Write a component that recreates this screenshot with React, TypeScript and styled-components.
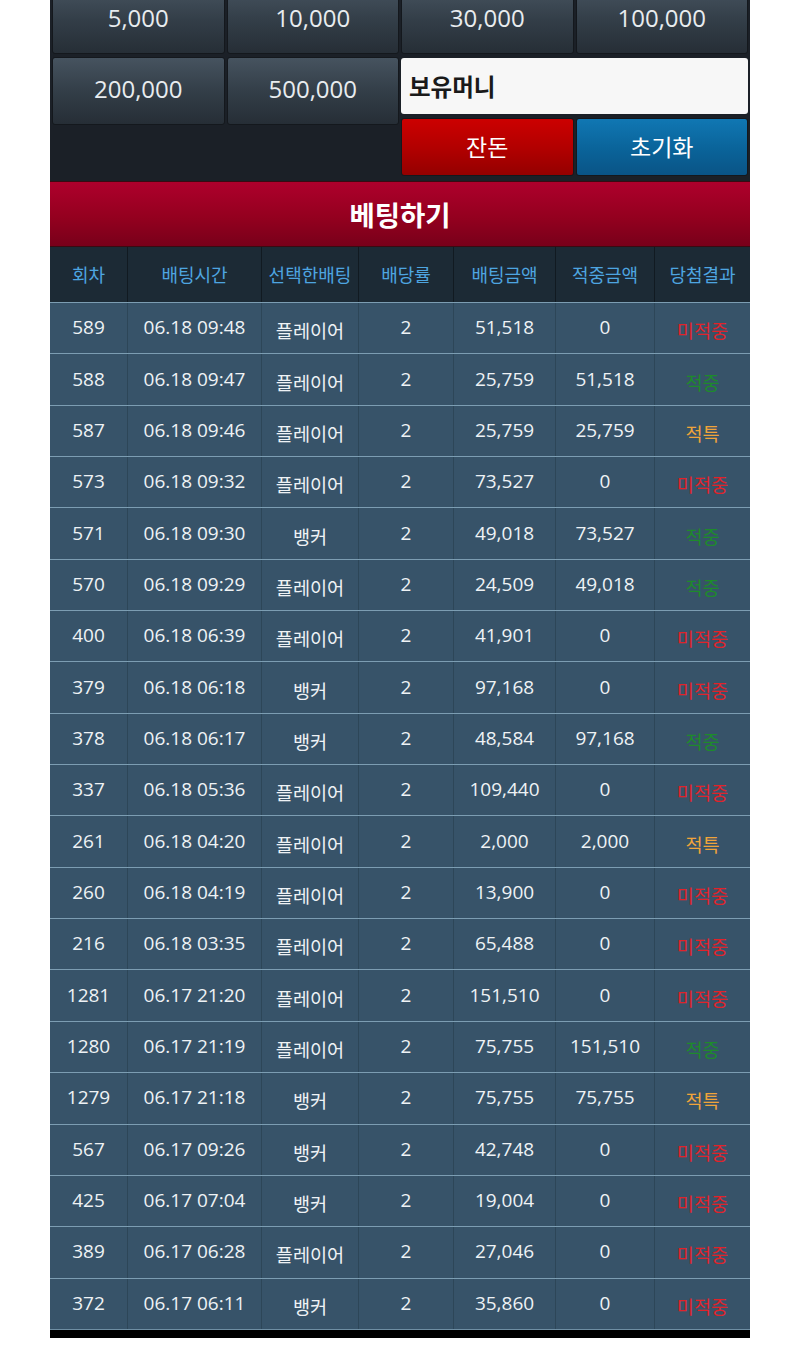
import React, {FC} from 'react';
import styled, {createGlobalStyle} from 'styled-components';

const GlobalStyle = createGlobalStyle`
  html, body {
    margin: 0;
    padding: 0;
    background: #ffffff;
  }
  body {
    font-family: "Open Sans", "Noto Sans CJK KR", sans-serif;
  }
`

const Page = styled.div`
  width: 700px;
  margin-left: 50px;
  overflow: hidden;
`

const Panel = styled.div`
  background-color: #1b2027;
  margin-top: -16px;
  padding: 2px 2px 5px 2px;
  display: grid;
  grid-template-columns: repeat(4, 1fr);
  column-gap: 2px;
  row-gap: 3px;
  align-items: start;
`

const ChipButton = styled.div`
  height: 68px;
  box-sizing: border-box;
  padding-bottom: 6px;
  border: 1px solid #14181d;
  border-radius: 3px;
  background: linear-gradient(to bottom, #46535f 0%, #333e48 50%, #262e36 100%);
  color: #e8ecef;
  font-size: 24px;
  display: flex;
  align-items: center;
  justify-content: center;
`

const Side = styled.div`
  grid-column: span 2;
  display: flex;
  flex-direction: column;
  gap: 4px;
  padding-top: 1px;
`

const MoneyBox = styled.div`
  height: 56px;
  background-color: #f7f7f7;
  border-radius: 3px;
  box-sizing: border-box;
  padding-left: 8px;
  display: flex;
  align-items: center;
  font-family: "Noto Sans CJK KR", sans-serif;
  font-weight: 700;
  font-size: 23.5px;
  color: #1a1a1a;
`

const ActionRow = styled.div`
  display: grid;
  grid-template-columns: 1fr 1fr;
  gap: 2px;
`

const ActionButton = styled.div<{ $tone: 'red' | 'blue' }>`
  height: 58px;
  border-radius: 3px;
  box-sizing: border-box;
  padding-bottom: 2px;
  border: 1px solid #14181d;
  background: ${p => p.$tone === 'red'
    ? 'linear-gradient(to bottom, #cc0000 0%, #b00000 55%, #940000 100%)'
    : 'linear-gradient(to bottom, #1077b3 0%, #0a6399 55%, #0a5486 100%)'};
  color: #ffffff;
  font-family: "Noto Sans CJK KR", sans-serif;
  font-size: 23px;
  display: flex;
  align-items: center;
  justify-content: center;
`

const TitleBar = styled.div`
  height: 64px;
  border-top: 1px solid #3a0a12;
  border-bottom: 1px solid #3a0a12;
  background: linear-gradient(to bottom, #ae002c 0%, #94001f 55%, #78001a 100%);
  color: #ffffff;
  font-family: "Noto Sans CJK KR", sans-serif;
  font-weight: 700;
  font-size: 27.5px;
  display: flex;
  align-items: center;
  justify-content: center;
`

const COLS = '77px 134px 97px 95px 102px 99px 96px'

const HeadRow = styled.div`
  display: grid;
  grid-template-columns: ${COLS};
  height: 55px;
  background-color: #1c2a35;
`

const HeadCell = styled.div`
  display: flex;
  align-items: center;
  justify-content: center;
  color: #4ea5e0;
  font-family: "Noto Sans CJK KR", sans-serif;
  font-size: 18px;
  padding-bottom: 2px;
  border-left: 1px solid #111a21;
  &:first-child {
    border-left: none;
  }
`

const Row = styled.div`
  display: grid;
  grid-template-columns: ${COLS};
  height: 51.35px;
  box-sizing: border-box;
  border-top: 1.5px solid #7c9db2;
  background-color: #375369;
`

const Cell = styled.div<{ $kr?: boolean; $color?: string }>`
  display: flex;
  align-items: center;
  justify-content: center;
  color: ${p => p.$color || '#eef2f5'};
  font-family: ${p => p.$kr ? '"Noto Sans CJK KR", sans-serif' : '"Open Sans", "Noto Sans CJK KR", sans-serif'};
  font-size: ${p => p.$kr ? '18.6px' : '19px'};
  padding-top: ${p => p.$kr ? '3px' : '0'};
  padding-bottom: ${p => p.$kr ? '0' : '2px'};
  border-left: 1px solid #2d4658;
  &:first-child {
    border-left: none;
  }
`

const BottomBar = styled.div`
  height: 8px;
  background-color: #000000;
  border-top: 1px solid #6e8ea3;
`

type Result = '미적중' | '적중' | '적특'

const resultColor: Record<Result, string> = {
  '미적중': '#e0232b',
  '적중': '#1e8a2c',
  '적특': '#f0a43a',
}

interface Bet {
  round: string
  time: string
  pick: string
  odds: string
  amount: string
  win: string
  result: Result
}

const bets: Bet[] = [
  {round: '589', time: '06.18 09:48', pick: '플레이어', odds: '2', amount: '51,518', win: '0', result: '미적중'},
  {round: '588', time: '06.18 09:47', pick: '플레이어', odds: '2', amount: '25,759', win: '51,518', result: '적중'},
  {round: '587', time: '06.18 09:46', pick: '플레이어', odds: '2', amount: '25,759', win: '25,759', result: '적특'},
  {round: '573', time: '06.18 09:32', pick: '플레이어', odds: '2', amount: '73,527', win: '0', result: '미적중'},
  {round: '571', time: '06.18 09:30', pick: '뱅커', odds: '2', amount: '49,018', win: '73,527', result: '적중'},
  {round: '570', time: '06.18 09:29', pick: '플레이어', odds: '2', amount: '24,509', win: '49,018', result: '적중'},
  {round: '400', time: '06.18 06:39', pick: '플레이어', odds: '2', amount: '41,901', win: '0', result: '미적중'},
  {round: '379', time: '06.18 06:18', pick: '뱅커', odds: '2', amount: '97,168', win: '0', result: '미적중'},
  {round: '378', time: '06.18 06:17', pick: '뱅커', odds: '2', amount: '48,584', win: '97,168', result: '적중'},
  {round: '337', time: '06.18 05:36', pick: '플레이어', odds: '2', amount: '109,440', win: '0', result: '미적중'},
  {round: '261', time: '06.18 04:20', pick: '플레이어', odds: '2', amount: '2,000', win: '2,000', result: '적특'},
  {round: '260', time: '06.18 04:19', pick: '플레이어', odds: '2', amount: '13,900', win: '0', result: '미적중'},
  {round: '216', time: '06.18 03:35', pick: '플레이어', odds: '2', amount: '65,488', win: '0', result: '미적중'},
  {round: '1281', time: '06.17 21:20', pick: '플레이어', odds: '2', amount: '151,510', win: '0', result: '미적중'},
  {round: '1280', time: '06.17 21:19', pick: '플레이어', odds: '2', amount: '75,755', win: '151,510', result: '적중'},
  {round: '1279', time: '06.17 21:18', pick: '뱅커', odds: '2', amount: '75,755', win: '75,755', result: '적특'},
  {round: '567', time: '06.17 09:26', pick: '뱅커', odds: '2', amount: '42,748', win: '0', result: '미적중'},
  {round: '425', time: '06.17 07:04', pick: '뱅커', odds: '2', amount: '19,004', win: '0', result: '미적중'},
  {round: '389', time: '06.17 06:28', pick: '플레이어', odds: '2', amount: '27,046', win: '0', result: '미적중'},
  {round: '372', time: '06.17 06:11', pick: '뱅커', odds: '2', amount: '35,860', win: '0', result: '미적중'},
]

const headers = ['회차', '배팅시간', '선택한배팅', '배당률', '배팅금액', '적중금액', '당첨결과']

const App: FC = () =>
  <Page>
    <GlobalStyle/>
    <Panel>
      {['5,000', '10,000', '30,000', '100,000', '200,000', '500,000'].map(v =>
        <ChipButton key={v}>{v}</ChipButton>)}
      <Side>
        <MoneyBox>보유머니</MoneyBox>
        <ActionRow>
          <ActionButton $tone="red">잔돈</ActionButton>
          <ActionButton $tone="blue">초기화</ActionButton>
        </ActionRow>
      </Side>
    </Panel>
    <TitleBar>베팅하기</TitleBar>
    <HeadRow>
      {headers.map(h => <HeadCell key={h}>{h}</HeadCell>)}
    </HeadRow>
    {bets.map(b =>
      <Row key={b.round + b.time}>
        <Cell>{b.round}</Cell>
        <Cell>{b.time}</Cell>
        <Cell $kr>{b.pick}</Cell>
        <Cell>{b.odds}</Cell>
        <Cell>{b.amount}</Cell>
        <Cell>{b.win}</Cell>
        <Cell $kr $color={resultColor[b.result]}>{b.result}</Cell>
      </Row>)}
    <BottomBar/>
  </Page>

export default App
